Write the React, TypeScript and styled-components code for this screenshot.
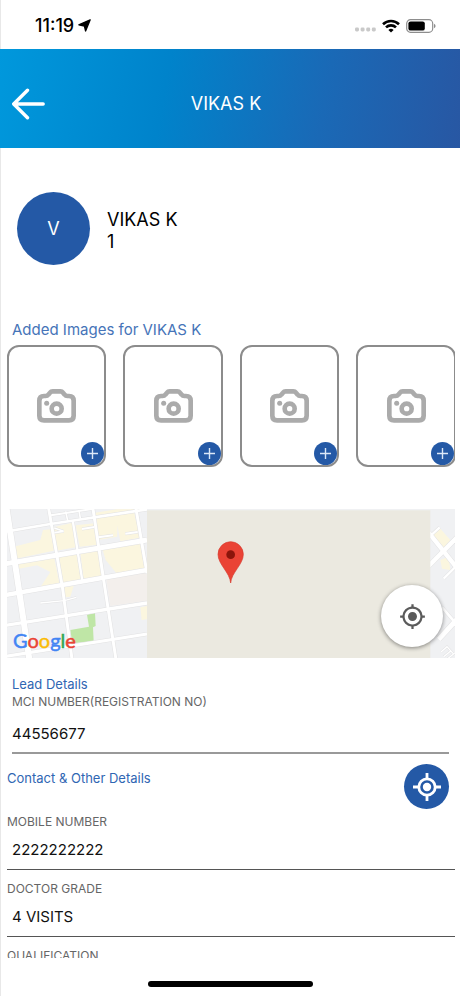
import React from "react";
import styled, { createGlobalStyle } from "styled-components";
import { MdMyLocation } from "react-icons/md";

const GlobalStyle = createGlobalStyle`
  *, *::before, *::after { box-sizing: border-box; }
  html, body { margin: 0; padding: 0; background: #fff; }
  body { font-family: Inter, "Liberation Sans", sans-serif; color: #111; }
  button, input { font: inherit; color: inherit; }
  button { border: 0; padding: 0; background: none; cursor: pointer; }
  h1, h2, p { margin: 0; font-weight: 400; }
`;

const Screen = styled.div`
  display: flex;
  flex-direction: column;
  height: 100vh;
  overflow: hidden;
  background: #fff;
`;

const StatusBar = styled.div`
  flex: none;
  display: flex;
  align-items: center;
  justify-content: space-between;
  height: 49px;
  padding: 2px 24px 0 34px;
  border-left: 1px solid #e8e8e8;
`;

const Clock = styled.div`
  display: flex;
  align-items: center;
  gap: 4px;
  font-size: 18px;
  font-weight: 500;
  line-height: 20px;
  color: #000;
`;

const StatusIcons = styled.div`
  display: flex;
  align-items: center;
  gap: 6px;
`;

const Header = styled.header`
  flex: none;
  display: grid;
  grid-template-columns: 56px 1fr 64px;
  align-items: center;
  height: 99px;
  padding-top: 10px;
  background: linear-gradient(100deg, #0098dc 0%, #0083cb 36%, #1a69b6 70%, #2857a3 100%);
  color: #fff;
`;

const BackButton = styled.button`
  display: flex;
  align-items: center;
  justify-content: center;
  height: 44px;
`;

const Title = styled.h1`
  font-size: 18px;
  line-height: 22px;
  text-align: center;
`;

const Content = styled.main`
  flex: 1;
  min-height: 0;
  overflow-y: auto;
  scrollbar-width: none;
  padding: 0 5px 0 6px;
  border-left: 1px solid #e8e8e8;
`;

const Profile = styled.section`
  display: flex;
  align-items: center;
  gap: 17px;
  padding: 44px 10px 56px;
`;

const Avatar = styled.div`
  display: grid;
  place-items: center;
  width: 73px;
  height: 73px;
  border-radius: 50%;
  background: #2459a6;
  color: #fff;
  font-size: 18px;
`;

const ProfileText = styled.div`
  padding-top: 4px;
  font-size: 18px;
  line-height: 22px;
  color: #000;
`;

const ImagesTitle = styled.h2`
  padding: 0 5px 6px;
  font-size: 15px;
  line-height: 18px;
  color: #4674b8;
`;

const ImageRow = styled.div`
  display: grid;
  grid-auto-flow: column;
  grid-auto-columns: 22.2%;
  gap: 17px;
  overflow-x: auto;
  scrollbar-width: none;
`;

const ImageCard = styled.div`
  position: relative;
  display: grid;
  place-items: center;
  height: 122px;
  border: 2px solid #8c8c8c;
  border-radius: 12px;
`;

const CameraButton = styled.button`
  display: flex;
`;

const AddButton = styled.button`
  position: absolute;
  right: 0;
  bottom: 0;
  display: grid;
  place-items: center;
  width: 23px;
  height: 23px;
  border-radius: 50%;
  background: #2459a6;
`;

const MapBox = styled.section`
  position: relative;
  height: 149px;
  margin: 42px 0 17px;
  overflow: hidden;
`;

const MapCanvas = styled.svg`
  display: block;
  width: 100%;
  height: 100%;
`;

const GoogleMark = styled.div`
  position: absolute;
  left: 6px;
  bottom: 6px;
  font-family: Lato, sans-serif;
  font-size: 20px;
  font-weight: 400;
  line-height: 24px;
  -webkit-text-stroke: 0.5px currentColor;
`;

const Letter = styled.span<{ $color: string }>`
  color: ${(p) => p.$color};
`;

const RecenterButton = styled.button`
  position: absolute;
  right: 12px;
  bottom: 11px;
  display: grid;
  place-items: center;
  width: 62px;
  height: 62px;
  border-radius: 50%;
  background: #fff;
  color: #5b5b5b;
  box-shadow: 0 1px 4px rgba(0, 0, 0, 0.45);
`;

const LeadSection = styled.section`
  padding: 0 6px 0 5px;
`;

const SectionTitle = styled.h2`
  font-size: 13px;
  line-height: 18px;
  color: #2f66b3;
`;

const ContactHead = styled.div`
  display: flex;
  align-items: flex-start;
  justify-content: space-between;
  padding: 10px 6px 4px 0;

  ${SectionTitle} {
    padding-top: 5px;
  }
`;

const LocateButton = styled.button`
  display: grid;
  place-items: center;
  width: 45px;
  height: 45px;
  border-radius: 50%;
  background: #2459a6;
`;

const Field = styled.div`
  padding-bottom: 10px;
`;

const LeadField = styled(Field)`
  padding-bottom: 0;
`;

const FieldLabel = styled.label`
  display: block;
  font-size: 12px;
  line-height: 18px;
  color: #666;
`;

const FieldInput = styled.input<{ $inset?: boolean; $tall?: boolean }>`
  display: block;
  width: 100%;
  height: ${(p) => (p.$tall ? 43 : 39)}px;
  padding: ${(p) => (p.$tall ? "4px 0 0" : "0 0 2px")};
  padding-left: ${(p) => (p.$inset ? 5 : 0)}px;
  border: 0;
  border-bottom: ${(p) => (p.$tall ? "2px solid #999" : "1px solid #555")};
  border-radius: 0;
  outline: 0;
  background: transparent;
  font-size: 15px;
  color: #111;
`;

const HomeArea = styled.footer`
  flex: none;
  display: flex;
  justify-content: center;
  align-items: flex-end;
  height: 38px;
  padding-bottom: 9px;
  border-left: 1px solid #e8e8e8;
`;

const HomeIndicator = styled.div`
  width: 36%;
  height: 6px;
  border-radius: 3px;
  background: #000;
`;

const LocationArrow = () => (
  <svg width="13" height="13" viewBox="0 0 13 13" aria-hidden="true">
    <path d="M12.2.8 7.6 12 6.4 7 .8 5.800Z" fill="#000" stroke="#000" strokeWidth="1.300" strokeLinejoin="round" />
  </svg>
);

const SignalDots = () => (
  <svg width="21" height="18" viewBox="0 0 21 18" aria-hidden="true">
    {[2, 7.6, 13.2, 18.8].map((x) => (
      <rect key={x} x={x - 2} y="10.500" width="4" height="4" rx="1.4" fill="#c9c9c9" />
    ))}
  </svg>
);

const WifiIcon = () => (
  <svg width="18" height="14" viewBox="0 0 18 14" aria-hidden="true">
    <g fill="none" stroke="#000" strokeWidth="2.600">
      <path d="M1 5.2a11.6 11.6 0 0 1 16 0" />
      <path d="M4 8.4a7.2 7.2 0 0 1 10 0" />
    </g>
    <path d="M9 13.6 6.4 11.1a3.7 3.7 0 0 1 5.2 0Z" fill="#000" />
  </svg>
);

const BatteryIcon = () => (
  <svg width="30" height="14" viewBox="0 0 30 14" aria-hidden="true">
    <rect x=".7" y=".7" width="26" height="12.6" rx="3.8" fill="none" stroke="#8d8d8d" strokeWidth="1.2" />
    <rect x="2.4" y="2.4" width="16.4" height="9.2" rx="2.2" fill="#000" />
    <path d="M28 4.8q1.6.7 1.6 2.2T28 9.2Z" fill="#8d8d8d" />
  </svg>
);

const BackArrow = () => (
  <svg width="34" height="32" viewBox="0 0 34 32" aria-hidden="true">
    <path
      d="M32.2 16H3M16.5 2.2 2.7 16l13.8 13.8"
      fill="none"
      stroke="#fff"
      strokeWidth="3.4"
      strokeLinecap="round"
      strokeLinejoin="round"
    />
  </svg>
);

const CameraIcon = () => (
  <svg width="41" height="36" viewBox="108 174 123 108" aria-hidden="true">
    <g fill="none" stroke="#ababab">
      <path
        strokeWidth="14"
        strokeLinejoin="round"
        d="M118 212q0-14 14-14h5q5 0 8-4l5-6q3-4 8-4h23q5 0 8 4l5 6q3 4 8 4h5q14 0 14 14v45q0 14-14 14H132q-14 0-14-14Z"
      />
      <circle cx="170" cy="236" r="15" strokeWidth="14" />
    </g>
    <circle cx="140" cy="220" r="7.5" fill="#ababab" />
  </svg>
);

const PlusIcon = () => (
  <svg width="11" height="11" viewBox="0 0 11 11" aria-hidden="true">
    <path d="M5.5 0v11M0 5.5h11" stroke="#dce8f8" strokeWidth="1.4" />
  </svg>
);

const TargetIcon = () => (
  <svg width="28" height="28" viewBox="0 0 28 28" aria-hidden="true">
    <g fill="none" stroke="#fff" strokeWidth="2.8">
      <circle cx="14" cy="14" r="8.2" />
      <path d="M14 0v6M14 22v6M0 14h6M22 14h6" />
    </g>
    <circle cx="14" cy="14" r="4.2" fill="#fff" />
  </svg>
);

const streets = [
  { w: 8, d: "M20 94 150 72 440 28" },
  { w: 15, d: "M10 192 440 120" },
  { w: 13, d: "M10 286 440 210" },
  { w: 10, d: "M10 377 440 309" },
  { w: 9, d: "M10 470 440 402" },
  { w: 18, d: "M18 20 50 230 88 485" },
  { w: 9, d: "M144 20 186 260 216 485" },
  { w: 9, d: "M277 20 310 240 348 485" },
  { w: 9, d: "M406 20 440 220" },
  { w: 7, d: "M217 60 246 242" },
  { w: 6, d: "M152 46 275 27" },
  { w: 5, d: "M196 34 202 62M236 30 240 56" },
  { w: 5, d: "M162 98 190 94M162 84 190 94" },
  { w: 6, d: "M245 87 282 81M294 112 338 106M375 101 412 96" },
  { w: 4, d: "M120 309 192 302 228 292" },
];

const diagonals = [
  { w: 13, d: "M1285 98 1370 204" },
  { w: 13, d: "M1285 198 1370 112" },
  { w: 7, d: "M1290 108 1318 82M1330 236 1370 196" },
  { w: 15, d: "M1315 418 1370 358" },
  { w: 8, d: "M1325 322 1370 374" },
  { w: 4, d: "M1322 456 1340 440 1358 460M1330 470 1352 452M1340 478 1364 458" },
];

const MapDrawing = () => (
  <MapCanvas viewBox="20 27 1344 447" preserveAspectRatio="xMidYMid slice" role="img" aria-label="Map">
    <rect x="0" y="0" width="1400" height="500" fill="#f0f1f3" />
    <g fill="#fbf6df">
      <path d="M150 84 216 68 226 142 168 152ZM226 76 284 70 292 134 238 140Z" />
      <path d="M284 38 350 28 400 28 408 70 352 78 350 110 294 120Z" />
      <path d="M350 70 412 62 424 112 360 124Z" />
      <path d="M40 140 120 120 128 90 152 88 160 152 46 176Z" />
      <path d="M52 188 160 166 178 254 120 262 150 216 110 196 56 206Z" />
      <path d="M174 168 230 160 242 240 186 250ZM240 158 294 148 306 232 250 240Z" />
      <path d="M306 146 424 130 436 206 350 222 316 180ZM188 262 220 258 210 290 192 292ZM420 322 440 318V358L424 360Z" />
      <path d="M1290 110 1320 86 1350 120 1330 150ZM1320 180 1345 170 1350 210 1325 206Z" />
    </g>
    <path d="M318 236 436 218 440 224V302L330 318Z" fill="#f3efec" />
    <path d="M260 344 284 338 286 378 278 382 280 424 216 430 210 390 266 380Z" fill="#bfe6a6" />
    <g fill="none" stroke="#e2e2e3">
      {[...streets, ...diagonals].map((s) => (
        <path key={s.d} d={s.d} strokeWidth={s.w + 3} />
      ))}
    </g>
    <g fill="none" stroke="#fff">
      {[...streets, ...diagonals].map((s) => (
        <path key={s.d} d={s.d} strokeWidth={s.w} />
      ))}
    </g>
    <rect x="440" y="31" width="850" height="460" fill="#ebe9e0" />
    <path
      d="M691 249C689 218 653 193 653 163a38 38 0 0 1 76 0C729 193 693 218 691 249Z"
      fill="#ea4335"
      stroke="#d63a2e"
      strokeWidth="2"
    />
    <circle cx="691" cy="164" r="13" fill="#8b150b" />
  </MapCanvas>
);

const googleLetters = [
  ["G", "#4285f4"],
  ["o", "#ea4335"],
  ["o", "#fbbc05"],
  ["g", "#4285f4"],
  ["l", "#34a853"],
  ["e", "#ea4335"],
];

const contactFields = [
  { id: "mobile", label: "MOBILE NUMBER", value: "2222222222" },
  { id: "grade", label: "DOCTOR GRADE", value: "4 VISITS" },
  { id: "qualification", label: "QUALIFICATION", value: "" },
];

export default function App() {
  return (
    <>
      <GlobalStyle />
      <Screen>
        <StatusBar>
          <Clock>
            11:19
            <LocationArrow />
          </Clock>
          <StatusIcons>
            <SignalDots />
            <WifiIcon />
            <BatteryIcon />
          </StatusIcons>
        </StatusBar>
        <Header>
          <BackButton aria-label="Back">
            <BackArrow />
          </BackButton>
          <Title>VIKAS K</Title>
        </Header>
        <Content>
          <Profile>
            <Avatar>V</Avatar>
            <ProfileText>
              <p>VIKAS K</p>
              <p>1</p>
            </ProfileText>
          </Profile>
          <ImagesTitle>Added Images for VIKAS K</ImagesTitle>
          <ImageRow>
            {[1, 2, 3, 4].map((n) => (
              <ImageCard key={n}>
                <CameraButton aria-label={`Take photo ${n}`}>
                  <CameraIcon />
                </CameraButton>
                <AddButton aria-label={`Add image ${n}`}>
                  <PlusIcon />
                </AddButton>
              </ImageCard>
            ))}
          </ImageRow>
          <MapBox>
            <MapDrawing />
            <GoogleMark>
              {googleLetters.map(([letter, color], i) => (
                <Letter key={i} $color={color}>
                  {letter}
                </Letter>
              ))}
            </GoogleMark>
            <RecenterButton aria-label="Center map on my location">
              <MdMyLocation size={27} />
            </RecenterButton>
          </MapBox>
          <LeadSection>
            <SectionTitle>Lead Details</SectionTitle>
            <LeadField>
              <FieldLabel htmlFor="mci">MCI NUMBER(REGISTRATION NO)</FieldLabel>
              <FieldInput id="mci" $tall defaultValue="44556677" />
            </LeadField>
          </LeadSection>
          <section>
            <ContactHead>
              <SectionTitle>Contact &amp; Other Details</SectionTitle>
              <LocateButton aria-label="Use current location">
                <TargetIcon />
              </LocateButton>
            </ContactHead>
            {contactFields.map((f) => (
              <Field key={f.id}>
                <FieldLabel htmlFor={f.id}>{f.label}</FieldLabel>
                <FieldInput id={f.id} $inset defaultValue={f.value} />
              </Field>
            ))}
          </section>
        </Content>
        <HomeArea>
          <HomeIndicator />
        </HomeArea>
      </Screen>
    </>
  );
}
